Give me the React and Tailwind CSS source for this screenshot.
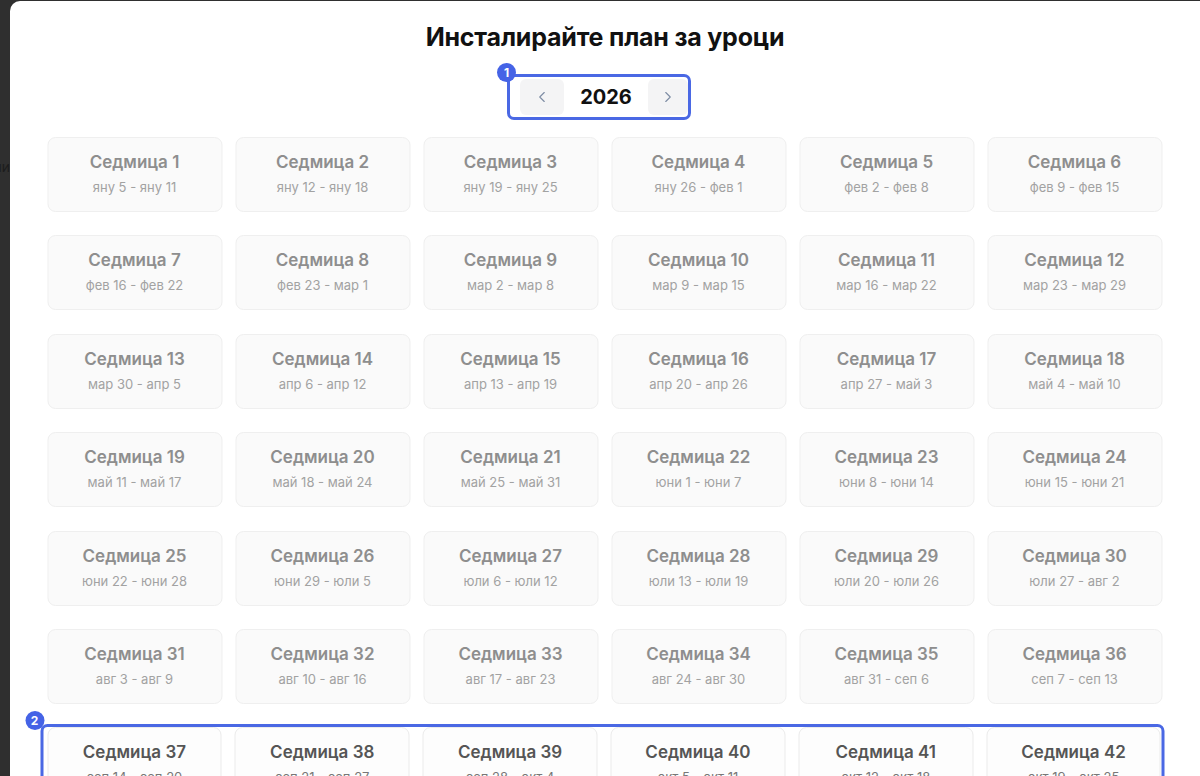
import React from 'react';
import {ChevronLeft, ChevronRight} from 'lucide-react';

const MONTHS = ['яну', 'фев', 'мар', 'апр', 'май', 'юни', 'юли', 'авг', 'сеп', 'окт', 'ное', 'дек'];

function weekRange(n) {
    const start = new Date(Date.UTC(2026, 0, 5 + (n - 1) * 7));
    const end = new Date(Date.UTC(2026, 0, 11 + (n - 1) * 7));
    const fmt = (d) => MONTHS[d.getUTCMonth()] + ' ' + d.getUTCDate();
    return fmt(start) + ' - ' + fmt(end);
}

const range = (from, to) => Array.from({length: to - from + 1}, (_, i) => from + i);

function WeekCard({n, active}) {
    return (
        <div
            className={
                active
                    ? 'h-[75px] rounded-[8px] border border-[#ebebeb] bg-[#fdfdfd] flex flex-col items-center pt-[13px]'
                    : 'h-[75px] rounded-[8px] border border-[#efefef] bg-[#fafafa] flex flex-col items-center pt-[13px]'
            }
        >
            <div className={active ? 'text-[17px] leading-[22px] font-semibold text-[#555555]' : 'text-[17px] leading-[22px] font-semibold text-[#8e8e8e]'}>
                Седмица {n}
            </div>
            <div className={active ? 'mt-[5px] text-[13px] leading-[18px] text-[#777777]' : 'mt-[5px] text-[13px] leading-[18px] text-[#a2a2a2]'}>
                {weekRange(n)}
            </div>
        </div>
    );
}

function Badge({children, className}) {
    return (
        <span className={'absolute w-[19px] h-[19px] rounded-full bg-[#4563e6] text-white text-[12px] font-bold leading-[19px] text-center ' + className}>
            {children}
        </span>
    );
}

export default function App() {
    return (
        <div className="flex h-screen overflow-hidden bg-[#2f2f2f]" style={{fontFamily: 'Inter, "Noto Sans", sans-serif'}}>
            <div className="w-[10px] shrink-0 overflow-hidden flex justify-end pt-[156px]">
                <span className="text-[14px] text-[#1c1c1c] whitespace-nowrap">Групи</span>
            </div>

            <div className="flex-1 mt-[1px] bg-white rounded-tl-[10px] flex flex-col items-center pt-[19px]">
                <h1 className="text-[25px] leading-[34px] font-bold text-[#111111] tracking-[-0.2px]">
                    Инсталирайте план за уроци
                </h1>

                <div className="relative mt-[20px] mr-[12px] border-[3px] border-[#4a68e4] rounded-[7px] pl-[10px] py-[2px] flex items-center">
                    <Badge className="-left-[13px] -top-[14px]">1</Badge>
                    <button className="w-[44px] h-[36px] rounded-[6px] bg-[#f4f4f5] flex items-center justify-center text-[#7d8ca3]">
                        <ChevronLeft size={18} strokeWidth={1.5} />
                    </button>
                    <span className="w-[84px] text-center text-[20px] font-bold text-[#111111]">2026</span>
                    <button className="w-[40px] h-[36px] rounded-[6px] bg-[#f4f4f5] flex items-center justify-center text-[#7d8ca3]">
                        <ChevronRight size={18} strokeWidth={1.5} />
                    </button>
                </div>

                <div className="w-[1115px] mt-[17px] -translate-x-[0.5px]">
                    <div className="grid grid-cols-6 gap-x-[13px] gap-y-[23.4px]">
                        {range(1, 36).map((n) => (
                            <WeekCard key={n} n={n} />
                        ))}
                    </div>

                    <div className="relative mt-[20px] -ml-[7px] -mr-[2px] border-[3px] border-[#4a68e4] rounded-[7px] pl-[4px]">
                        <Badge className="-left-[18px] -top-[16px]">2</Badge>
                        <div className="grid grid-cols-6 gap-x-[13px] gap-y-[23.4px]">
                            {range(37, 42).map((n) => (
                                <WeekCard key={n} n={n} active />
                            ))}
                        </div>
                    </div>
                </div>
            </div>
        </div>
    );
}
